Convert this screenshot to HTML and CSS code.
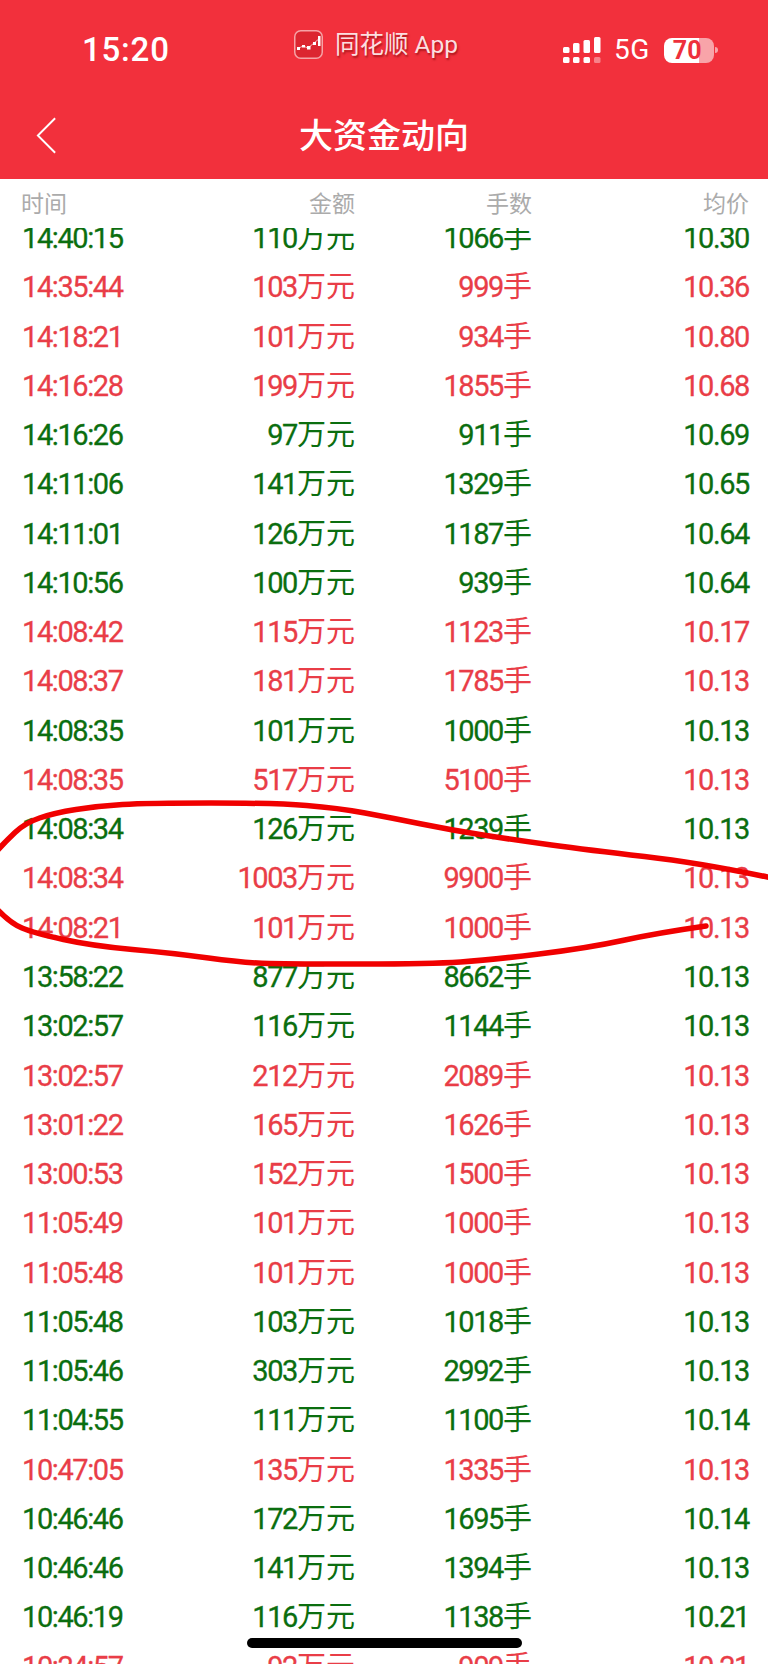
FILE: index.html
```html
<!DOCTYPE html>
<html lang="zh-CN">
<head>
<meta charset="utf-8">
<title>大资金动向</title>
<link rel="stylesheet" href="styles.css">
</head>
<body>
<div class="screen">
  <header class="topbar">
    <div class="status">
      <span class="clock">15:20</span>
      <div class="carrier">
        <svg class="app-icon" viewBox="0 0 29 29" aria-hidden="true">
          <rect x="0.75" y="0.75" width="27.5" height="27.5" rx="6" fill="#dc2630" stroke="#f6a3a6" stroke-width="1.5"/>
          <path d="M3 19 L9 16 L14 18 L20 13 L26 8" fill="none" stroke="#f7b9bb" stroke-width="1"/>
          <rect x="3" y="17" width="3" height="3" fill="#fff"/>
          <rect x="8" y="15" width="3" height="2.5" fill="#fff"/>
          <rect x="13" y="16" width="3.5" height="3.5" fill="#fff"/>
          <rect x="19" y="12" width="3" height="3" fill="#fff"/>
          <rect x="24" y="6" width="2.5" height="10" fill="#fff"/>
        </svg>
        <span class="carrier-name">同花顺 App</span>
      </div>
      <div class="indicators">
        <svg class="signal" viewBox="0 0 38 26" aria-hidden="true">
          <rect x="0" y="10" width="6.5" height="6" rx="1.5" fill="#fff"/>
          <rect x="10" y="6" width="6.5" height="10" rx="1.5" fill="#fff"/>
          <rect x="20.500" y="3" width="6.5" height="13" rx="1.5" fill="#fff"/>
          <rect x="31" y="0" width="6.5" height="16" rx="1.5" fill="#fff"/>
          <rect x="0" y="20" width="6.5" height="6" rx="1.5" fill="#fff"/>
          <rect x="10" y="20" width="6.500" height="6" rx="1.500" fill="#fff"/>
          <rect x="20.500" y="20" width="6.5" height="6" rx="1.5" fill="#fff"/>
          <rect x="31" y="20" width="6.5" height="6" rx="1.500" fill="#fff" fill-opacity="0.4"/>
        </svg>
        <span class="network">5G</span>
        <div class="battery"><span class="battery-level">70</span></div>
        <span class="battery-nub"></span>
      </div>
    </div>
    <div class="navbar">
      <svg class="back" viewBox="0 0 24 40" aria-hidden="true">
        <path d="M21 2 L3 20 L21 38" fill="none" stroke="#fff" stroke-width="2"/>
      </svg>
      <h1 class="title">大资金动向</h1>
    </div>
  </header>

  <div class="table-head row">
    <span>时间</span><span>金额</span><span>手数</span><span>均价</span>
  </div>

  <div class="table-body">
    <div class="rows">
      <div class="row up"><span>14:40:15</span><span>110<i>万元</i></span><span>1066<i>手</i></span><span>10.30</span></div>
      <div class="row down"><span>14:35:44</span><span>103<i>万元</i></span><span>999<i>手</i></span><span>10.36</span></div>
      <div class="row down"><span>14:18:21</span><span>101<i>万元</i></span><span>934<i>手</i></span><span>10.80</span></div>
      <div class="row down"><span>14:16:28</span><span>199<i>万元</i></span><span>1855<i>手</i></span><span>10.68</span></div>
      <div class="row up"><span>14:16:26</span><span>97<i>万元</i></span><span>911<i>手</i></span><span>10.69</span></div>
      <div class="row up"><span>14:11:06</span><span>141<i>万元</i></span><span>1329<i>手</i></span><span>10.65</span></div>
      <div class="row up"><span>14:11:01</span><span>126<i>万元</i></span><span>1187<i>手</i></span><span>10.64</span></div>
      <div class="row up"><span>14:10:56</span><span>100<i>万元</i></span><span>939<i>手</i></span><span>10.64</span></div>
      <div class="row down"><span>14:08:42</span><span>115<i>万元</i></span><span>1123<i>手</i></span><span>10.17</span></div>
      <div class="row down"><span>14:08:37</span><span>181<i>万元</i></span><span>1785<i>手</i></span><span>10.13</span></div>
      <div class="row up"><span>14:08:35</span><span>101<i>万元</i></span><span>1000<i>手</i></span><span>10.13</span></div>
      <div class="row down"><span>14:08:35</span><span>517<i>万元</i></span><span>5100<i>手</i></span><span>10.13</span></div>
      <div class="row up"><span>14:08:34</span><span>126<i>万元</i></span><span>1239<i>手</i></span><span>10.13</span></div>
      <div class="row down"><span>14:08:34</span><span>1003<i>万元</i></span><span>9900<i>手</i></span><span>10.13</span></div>
      <div class="row down"><span>14:08:21</span><span>101<i>万元</i></span><span>1000<i>手</i></span><span>10.13</span></div>
      <div class="row up"><span>13:58:22</span><span>877<i>万元</i></span><span>8662<i>手</i></span><span>10.13</span></div>
      <div class="row up"><span>13:02:57</span><span>116<i>万元</i></span><span>1144<i>手</i></span><span>10.13</span></div>
      <div class="row down"><span>13:02:57</span><span>212<i>万元</i></span><span>2089<i>手</i></span><span>10.13</span></div>
      <div class="row down"><span>13:01:22</span><span>165<i>万元</i></span><span>1626<i>手</i></span><span>10.13</span></div>
      <div class="row down"><span>13:00:53</span><span>152<i>万元</i></span><span>1500<i>手</i></span><span>10.13</span></div>
      <div class="row down"><span>11:05:49</span><span>101<i>万元</i></span><span>1000<i>手</i></span><span>10.13</span></div>
      <div class="row down"><span>11:05:48</span><span>101<i>万元</i></span><span>1000<i>手</i></span><span>10.13</span></div>
      <div class="row up"><span>11:05:48</span><span>103<i>万元</i></span><span>1018<i>手</i></span><span>10.13</span></div>
      <div class="row up"><span>11:05:46</span><span>303<i>万元</i></span><span>2992<i>手</i></span><span>10.13</span></div>
      <div class="row up"><span>11:04:55</span><span>111<i>万元</i></span><span>1100<i>手</i></span><span>10.14</span></div>
      <div class="row down"><span>10:47:05</span><span>135<i>万元</i></span><span>1335<i>手</i></span><span>10.13</span></div>
      <div class="row up"><span>10:46:46</span><span>172<i>万元</i></span><span>1695<i>手</i></span><span>10.14</span></div>
      <div class="row up"><span>10:46:46</span><span>141<i>万元</i></span><span>1394<i>手</i></span><span>10.13</span></div>
      <div class="row up"><span>10:46:19</span><span>116<i>万元</i></span><span>1138<i>手</i></span><span>10.21</span></div>
      <div class="row down"><span>10:24:57</span><span>92<i>万元</i></span><span>909<i>手</i></span><span>10.21</span></div>
    </div>
  </div>

  <svg class="annotation" viewBox="0 0 768 1664" aria-hidden="true">
    <path d="M772 878 Q701 863 644.5 856.500 Q588 850 551.500 845 Q515 840 483 835 Q451 830 421.500 824 Q392 818 365 813 Q338 808 306.500 805.500 Q275 803 211 803 Q147 803 122.500 804.500 Q98 806 76 809.500 Q54 813 39.500 818 Q25 823 15 832.500 Q5 842 -4 852 M-4 908 Q10 923 22 928 Q34 933 63.500 939.500 Q93 946 132.500 949.500 Q172 953 208.500 958 Q245 963 269.500 963.500 Q294 964 362.500 964 Q431 964 460.500 962 Q490 960 539 954 Q588 948 622.500 940.500 Q657 933 706 926" fill="none" stroke="#f00000" stroke-width="5.5" stroke-linecap="round" stroke-linejoin="round"/>
  </svg>
  <div class="home-indicator"></div>
</div>
</body>
</html>
```

FILE: styles.css
```css
* {
  box-sizing: border-box;
}

html,
body {
  margin: 0;
  padding: 0;
  background: #fff;
}

.screen {
  position: relative;
  display: flex;
  flex-direction: column;
  width: 768px;
  height: 1664px;
  overflow: hidden;
  font-family: Roboto, "Noto Sans CJK SC", sans-serif;
}

.topbar {
  flex: none;
  height: 179px;
  background: #f2303c;
  color: #fff;
}

.status {
  display: flex;
  align-items: flex-start;
  height: 104px;
  padding: 29px 0 0 82px;
}

.clock {
  width: 212px;
  margin-top: 4px;
  font-size: 33px;
  font-weight: 500;
  line-height: 33px;
  letter-spacing: 0.8px;
}

.carrier {
  display: flex;
  align-items: center;
  gap: 12px;
  width: 269px;
}

.app-icon {
  flex: none;
  width: 29px;
  height: 29px;
}

.carrier-name {
  padding-top: 1px;
  font-size: 24.5px;
  line-height: 29px;
  color: #fbdfe0;
  text-shadow: 1px 2px 2px rgba(110, 0, 0, 0.55);
}

.indicators {
  display: flex;
  align-items: center;
  height: 26px;
  margin-top: 8px;
}

.signal {
  flex: none;
  width: 38px;
  height: 26px;
}

.network {
  margin-left: 13px;
  font-size: 28px;
  line-height: 26px;
  letter-spacing: 0.5px;
}

.battery {
  width: 50px;
  height: 25px;
  margin-left: 14px;
  padding-left: 9px;
  border-radius: 8px;
  background: linear-gradient(to right, #fff 70%, #f8a4a9 70%);
}

.battery-level {
  display: block;
  font-size: 25px;
  font-weight: 700;
  line-height: 25px;
  color: #ee2f3b;
}

.battery-nub {
  width: 3px;
  height: 6px;
  margin-left: 1px;
  border-radius: 0 3px 3px 0;
  background: #f8a4a9;
}

.navbar {
  position: relative;
  display: flex;
  justify-content: center;
  height: 75px;
}

.back {
  position: absolute;
  top: 12px;
  left: 35px;
  width: 23px;
  height: 39px;
}

.title {
  margin: 11px 0 0;
  font-size: 34px;
  font-weight: 500;
  line-height: 42px;
  color: #fff;
}

.row {
  display: grid;
  grid-template-columns: 151px 182px 177px 217px;
  flex: none;
  align-items: center;
  padding-left: 22px;
  height: 49.28px;
  font-size: 29px;
  line-height: 34px;
  letter-spacing: -1.4px;
  white-space: nowrap;
  -webkit-text-stroke: 0.3px currentColor;
}

.row span + span {
  text-align: right;
}

.row i {
  font-style: normal;
  letter-spacing: 0;
  -webkit-text-stroke: 0;
}

.table-head {
  grid-template-columns: 152px 182px 177px 217px;
  height: 49px;
  padding-top: 2px;
  padding-left: 21px;
  font-size: 23px;
  letter-spacing: 0;
  color: #ababab;
  -webkit-text-stroke: 0;
}

.table-body {
  flex: 1;
  min-height: 0;
  overflow: hidden;
}

.rows {
  margin-top: -14.6px;
}

.up {
  color: #0b6e0f;
}

.down {
  color: #e93d47;
}

.annotation {
  position: absolute;
  top: 0;
  left: 0;
  width: 768px;
  height: 1664px;
  pointer-events: none;
}

.home-indicator {
  position: absolute;
  top: 1638px;
  left: 247px;
  width: 275px;
  height: 10px;
  border-radius: 5px;
  background: #000;
}
```
